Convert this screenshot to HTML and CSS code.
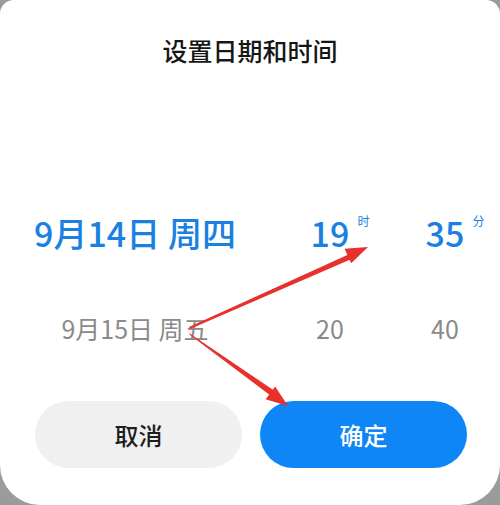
FILE: index.html
```html
<!DOCTYPE html>
<html lang="zh">
<head>
    <meta charset="UTF-8">
    <title>设置日期和时间</title>
    <link rel="stylesheet" href="styles.css">
</head>
<body>
    <div class="dialog">
        <h1 class="title">设置日期和时间</h1>

        <div class="picker">
            <div class="cell date selected">9月14日 周四</div>
            <div class="cell selected"><span class="num">19<span class="unit">时</span></span></div>
            <div class="cell selected"><span class="num">35<span class="unit">分</span></span></div>

            <div class="cell date">9月15日 周五</div>
            <div class="cell"><span class="num">20</span></div>
            <div class="cell"><span class="num">40</span></div>
        </div>

        <div class="actions">
            <button class="btn cancel">取消</button>
            <button class="btn confirm">确定</button>
        </div>

        <!-- annotation arrows drawn over the dialog -->
        <svg class="arrows" width="500" height="505" viewBox="0 0 500 505">
            <polygon points="189,327 349.5,254 351.5,259 190,329" fill="#e8302c"/>
            <polygon points="368,247 351.2,263.3 344.6,248.7" fill="#e8302c"/>
            <polygon points="189,333 274,390.5 270.5,395.5 190,335" fill="#e8302c"/>
            <polygon points="288,406 265.6,399.3 275.2,386.5" fill="#e8302c"/>
        </svg>
    </div>
</body>
</html>
```

FILE: styles.css
```css
body {
    margin: 0;
    background: #9b9b9b;
    font-family: 'Noto Sans CJK SC', 'Noto Sans', sans-serif;
}
.dialog {
    position: relative;
    width: 500px;
    height: 505px;
    background: #fff;
    border-radius: 14px 14px 40px 40px;
    overflow: hidden;
}
.title {
    margin: 0;
    padding-top: 35px;
    text-align: center;
    font-size: 25px;
    line-height: 30px;
    font-weight: 500;
    color: #161616;
}
.picker {
    margin-top: 120px;
    display: grid;
    grid-template-columns: 270px 120px 110px;
    grid-auto-rows: 95px;
}
.cell {
    display: flex;
    align-items: center;
    justify-content: center;
    color: #8a8a8a;
    font-size: 25px;
}
.cell.selected {
    color: #1a80e2;
    font-size: 34px;
    font-weight: 500;
}
.num {
    position: relative;
}
.unit {
    position: absolute;
    left: 100%;
    top: 7px;
    margin-left: 8px;
    font-size: 12px;
    font-weight: 400;
    line-height: 1;
    white-space: nowrap;
}
.actions {
    margin-top: 26px;
    padding: 0 33px 0 35px;
    display: grid;
    grid-template-columns: 1fr 1fr;
    gap: 18px;
}
.btn {
    height: 67px;
    border: none;
    border-radius: 34px;
    font-family: inherit;
    font-size: 24px;
    font-weight: 500;
}
.cancel {
    background: #f0f0f0;
    color: #1e1e1e;
}
.confirm {
    background: #0f86f5;
    color: #fff;
}
.arrows {
    position: absolute;
    left: 0;
    top: 0;
    pointer-events: none;
}
```
